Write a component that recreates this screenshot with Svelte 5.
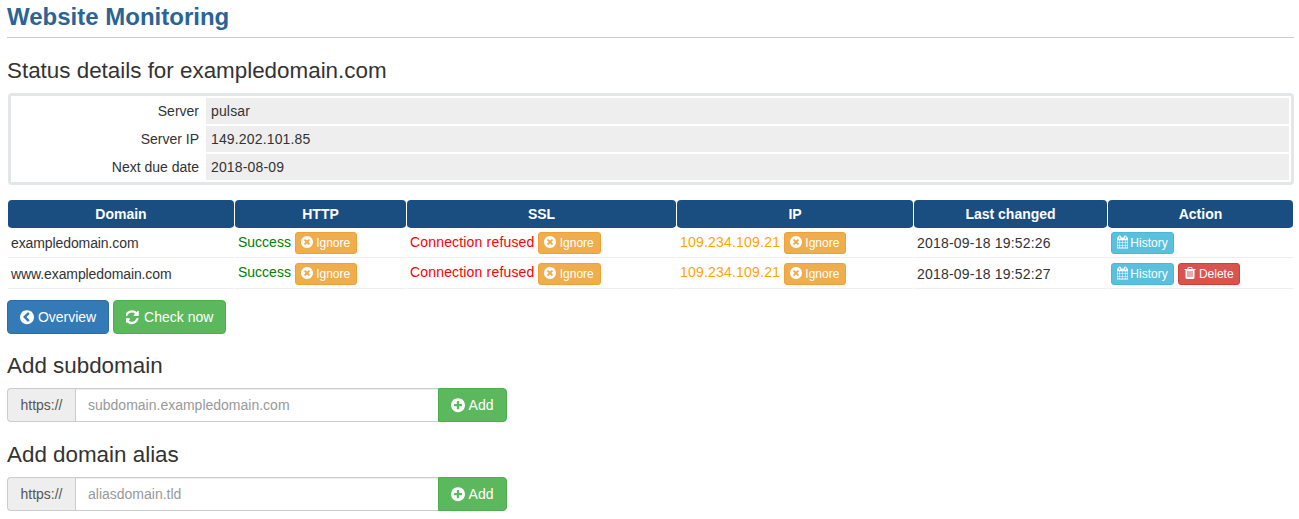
<script lang="ts">
  const icons = {
    times: "M1277 1122q0-26-19-45l-181-181 181-181q19-19 19-45 0-27-19-46l-90-90q-19-19-46-19-26 0-45 19l-181 181-181-181q-19-19-45-19-27 0-46 19l-90 90q-19 19-19 46 0 26 19 45l181 181-181 181q-19 19-19 45 0 27 19 46l90 90q19 19 46 19 26 0 45-19l181-181 181 181q19 19 45 19 27 0 46-19l90-90q19-19 19-46zm387-226q0 209-103 385.5t-279.5 279.5-385.5 103-385.5-103-279.5-279.5-103-385.5 103-385.5 279.5-279.5 385.5-103 385.5 103 279.5 279.5 103 385.5z",
    plus: "M1344 960v-128q0-26-19-45t-45-19h-256v-256q0-26-19-45t-45-19h-128q-26 0-45 19t-19 45v256h-256q-26 0-45 19t-19 45v128q0 26 19 45t45 19h256v256q0 26 19 45t45 19h128q26 0 45-19t19-45v-256h256q26 0 45-19t19-45zm320-64q0 209-103 385.5t-279.5 279.5-385.5 103-385.5-103-279.5-279.5-103-385.5 103-385.5 279.5-279.5 385.5-103 385.5 103 279.5 279.5 103 385.5z",
    back: "M1043 1373l102-102q19-19 19-45t-19-45l-307-307 307-307q19-19 19-45t-19-45l-102-102q-19-19-45-19t-45 19l-454 454q-19 19-19 45t19 45l454 454q19 19 45 19t45-19zm621-477q0 209-103 385.5t-279.5 279.5-385.5 103-385.5-103-279.5-279.5-103-385.5 103-385.5 279.5-279.5 385.5-103 385.5 103 279.5 279.5 103 385.5z",
    refresh: "M1511 1056q0 5-1 7-64 268-268 434.5t-478 166.5q-146 0-282.5-55t-243.5-157l-129 129q-19 19-45 19t-45-19-19-45v-448q0-26 19-45t45-19h448q26 0 45 19t19 45-19 45l-137 137q71 66 161 102t187 36q134 0 250-65t186-179q11-17 53-117 8-23 30-23h192q13 0 22.5 9.5t9.5 22.5zm25-800v448q0 26-19 45t-45 19h-448q-26 0-45-19t-19-45 19-45l138-138q-148-137-349-137-134 0-250 65t-186 179q-11 17-53 117-8 23-30 23h-199q-13 0-22.5-9.5t-9.5-22.5v-7q65-268 270-434.5t480-166.5q146 0 284 55.5t245 156.5l130-129q19-19 45-19t45 19 19 45z",
    calendar: "M192 1664h288v-288h-288v288zm352 0h320v-288h-320v288zm-352-352h288v-320h-288v320zm352 0h320v-320h-320v320zm-352-384h288v-288h-288v288zm736 736h320v-288h-320v288zm-384-736h320v-288h-320v288zm768 736h288v-288h-288v288zm-384-352h320v-320h-320v320zm-352-864v-288q0-13-9.5-22.5t-22.5-9.5h-64q-13 0-22.5 9.5t-9.5 22.5v288q0 13 9.5 22.5t22.5 9.5h64q13 0 22.5-9.5t9.5-22.5zm736 864h288v-320h-288v320zm-384-384h320v-288h-320v288zm384 0h288v-288h-288v288zm32-480v-288q0-13-9.5-22.5t-22.5-9.5h-64q-13 0-22.5 9.5t-9.5 22.5v288q0 13 9.5 22.5t22.5 9.5h64q13 0 22.5-9.5t9.5-22.5zm384-64v1280q0 52-38 90t-90 38h-1408q-52 0-90-38t-38-90v-1280q0-52 38-90t90-38h128v-96q0-66 47-113t113-47h64q66 0 113 47t47 113v96h384v-96q0-66 47-113t113-47h64q66 0 113 47t47 113v96h128q52 0 90 38t38 90z",
    trash: "M704 1376v-704q0-14-9-23t-23-9h-64q-14 0-23 9t-9 23v704q0 14 9 23t23 9h64q14 0 23-9t9-23zm256 0v-704q0-14-9-23t-23-9h-64q-14 0-23 9t-9 23v704q0 14 9 23t23 9h64q14 0 23-9t9-23zm256 0v-704q0-14-9-23t-23-9h-64q-14 0-23 9t-9 23v704q0 14 9 23t23 9h64q14 0 23-9t9-23zm-544-992h448l-48-117q-7-9-17-11h-317q-10 2-17 11zm928 32v64q0 14-9 23t-23 9h-96v948q0 83-47 143.5t-113 60.5h-832q-66 0-113-58.5t-47-141.5v-952h-96q-14 0-23-9t-9-23v-64q0-14 9-23t23-9h309l70-167q15-37 54-63t79-26h320q40 0 79 26t54 63l70 167h309q14 0 23 9t9 23z"
  };

  const details = [
    ["Server", "pulsar"],
    ["Server IP", "149.202.101.85"],
    ["Next due date", "2018-08-09"]
  ];

  const rows = [
    { domain: "exampledomain.com", changed: "2018-09-18 19:52:26", canDelete: false },
    { domain: "www.exampledomain.com", changed: "2018-09-18 19:52:27", canDelete: true }
  ];

  const forms = [
    { title: "Add subdomain", placeholder: "subdomain.exampledomain.com" },
    { title: "Add domain alias", placeholder: "aliasdomain.tld" }
  ];
</script>

{#snippet icon(d)}
  <svg class="fa" viewBox="128 0 1536 1792" aria-hidden="true"><path {d} fill="currentColor" /></svg>
{/snippet}

{#snippet ignore()}
  <button class="btn xs warning">{@render icon(icons.times)} Ignore</button>
{/snippet}

<div class="page">
  <h1>Website Monitoring</h1>
  <h2>Status details for exampledomain.com</h2>

  <table class="details">
    <tbody>
      {#each details as [label, value]}
        <tr>
          <td class="label">{label}</td>
          <td class="value">{value}</td>
        </tr>
      {/each}
    </tbody>
  </table>

  <table class="status">
    <thead>
      <tr>
        <th class="c1">Domain</th>
        <th class="c2">HTTP</th>
        <th class="c3">SSL</th>
        <th class="c4">IP</th>
        <th class="c5">Last changed</th>
        <th>Action</th>
      </tr>
    </thead>
    <tbody>
      {#each rows as row}
        <tr class:tall={row.canDelete}>
          <td class="domain">{row.domain}</td>
          <td><span class="ok">Success</span> {@render ignore()}</td>
          <td><span class="bad">Connection refused</span> {@render ignore()}</td>
          <td><span class="warn">109.234.109.21</span> {@render ignore()}</td>
          <td class="changed">{row.changed}</td>
          <td>
            <button class="btn xs info">{@render icon(icons.calendar)} History</button>
            {#if row.canDelete}
              <button class="btn xs danger">{@render icon(icons.trash)} Delete</button>
            {/if}
          </td>
        </tr>
      {/each}
    </tbody>
  </table>

  <div class="actions">
    <button class="btn primary">{@render icon(icons.back)} Overview</button>
    <button class="btn success">{@render icon(icons.refresh)} Check now</button>
  </div>

  {#each forms as form}
    <h3>{form.title}</h3>
    <div class="input-group">
      <span class="addon">https://</span>
      <input type="text" placeholder={form.placeholder} />
      <button class="btn success add">{@render icon(icons.plus)} Add</button>
    </div>
  {/each}
</div>

<style>
  :global(body) {
    margin: 0;
    background: #fff;
    color: #333;
    font-family: "Liberation Sans", Arial, sans-serif;
    font-size: 14px;
    line-height: 20px;
  }

  * {
    box-sizing: border-box;
  }

  .page {
    padding: 0 5px 0 7px;
    height: 519px;
    overflow: hidden;
  }

  h1 {
    margin: 0;
    height: 38px;
    padding-top: 3px;
    border-bottom: 1px solid #ccc;
    color: #2a6496;
    font-size: 24px;
    line-height: 27px;
    font-weight: bold;
  }

  h2,
  h3 {
    font-weight: 500;
    font-size: 22.4px;
    line-height: 24px;
  }

  h2 {
    margin: 21px 0 10px;
  }

  h3 {
    margin: 0 0 10px;
  }

  .details {
    width: 1286px;
    margin-left: 1px;
    border: 3px solid #e3e7e9;
    border-radius: 4px;
    border-spacing: 2px;
    border-collapse: separate;
  }

  .details td {
    height: 26px;
    padding: 0 5px;
  }

  .label {
    width: 191px;
    text-align: right;
  }

  .value {
    background: #eee;
    letter-spacing: 0.15px;
  }

  .status {
    width: 1287px;
    margin-top: 15px;
    table-layout: fixed;
    border-collapse: separate;
    border-spacing: 1px 0;
  }

  .status th {
    height: 29px;
    border-bottom: 1px solid #fff;
    background: #1a4e80;
    background-clip: padding-box;
    border-radius: 4px;
    color: #fff;
    font-weight: bold;
    text-align: center;
  }

  .c1 { width: 226px; }
  .c2 { width: 171px; }
  .c3 { width: 269px; }
  .c4 { width: 236px; }
  .c5 { width: 193px; }

  .status td {
    height: 29px;
    padding: 2px 3px 2px;
    border-bottom: 1px solid #eee;
    white-space: nowrap;
  }

  .status tr.tall td {
    height: 31px;
    padding-top: 3px;
  }

  .tall .btn {
    vertical-align: -1px;
  }

  .domain { letter-spacing: -0.1px; }
  .changed { letter-spacing: 0.2px; }
  .ok { color: green; }
  .bad { color: red; letter-spacing: 0.17px; }
  .warn { color: orange; letter-spacing: 0.2px; }

  .btn {
    display: inline-block;
    height: 34px;
    padding: 6px 12px;
    border: 1px solid transparent;
    border-radius: 4px;
    color: #fff;
    font: inherit;
    line-height: 20px;
    white-space: nowrap;
  }

  .btn.xs {
    height: 22px;
    padding: 1px 5px;
    border-radius: 3px;
    font-size: 12px;
    line-height: 18px;
  }

  .primary { background: #337ab7; border-color: #2e6da4; }
  .success { background: #5cb85c; border-color: #4cae4c; }
  .info { background: #5bc0de; border-color: #46b8da; }
  .btn.warning { background: #f0ad4e; border-color: #eea236; padding-right: 6px; }
  .danger { background: #d9534f; border-color: #d43f3a; }

  .fa {
    display: inline-block;
    width: 14px;
    height: 16.3px;
    vertical-align: -3px;
  }

  .xs .fa {
    width: 12px;
    height: 14px;
    vertical-align: -2px;
  }

  .info .fa {
    width: 11px;
    margin-right: -1px;
  }

  .actions {
    display: flex;
    gap: 4px;
    margin: 11px 0 20px;
  }

  .input-group {
    display: flex;
    width: 500px;
    height: 34px;
    margin-bottom: 21px;
  }

  .addon {
    width: 68px;
    padding: 6px 12px;
    border: 1px solid #ccc;
    border-right: 0;
    border-radius: 4px 0 0 4px;
    background: #eee;
    color: #555;
    text-align: center;
  }

  input {
    flex: 1;
    min-width: 0;
    padding: 6px 12px;
    border: 1px solid #ccc;
    border-right: 0;
    color: #555;
    font: inherit;
    outline: none;
    box-shadow: inset 0 1px 1px rgba(0, 0, 0, 0.075);
  }

  input::placeholder {
    color: #999;
    opacity: 1;
  }

  .add {
    width: 69px;
    border-radius: 0 4px 4px 0;
  }
</style>
